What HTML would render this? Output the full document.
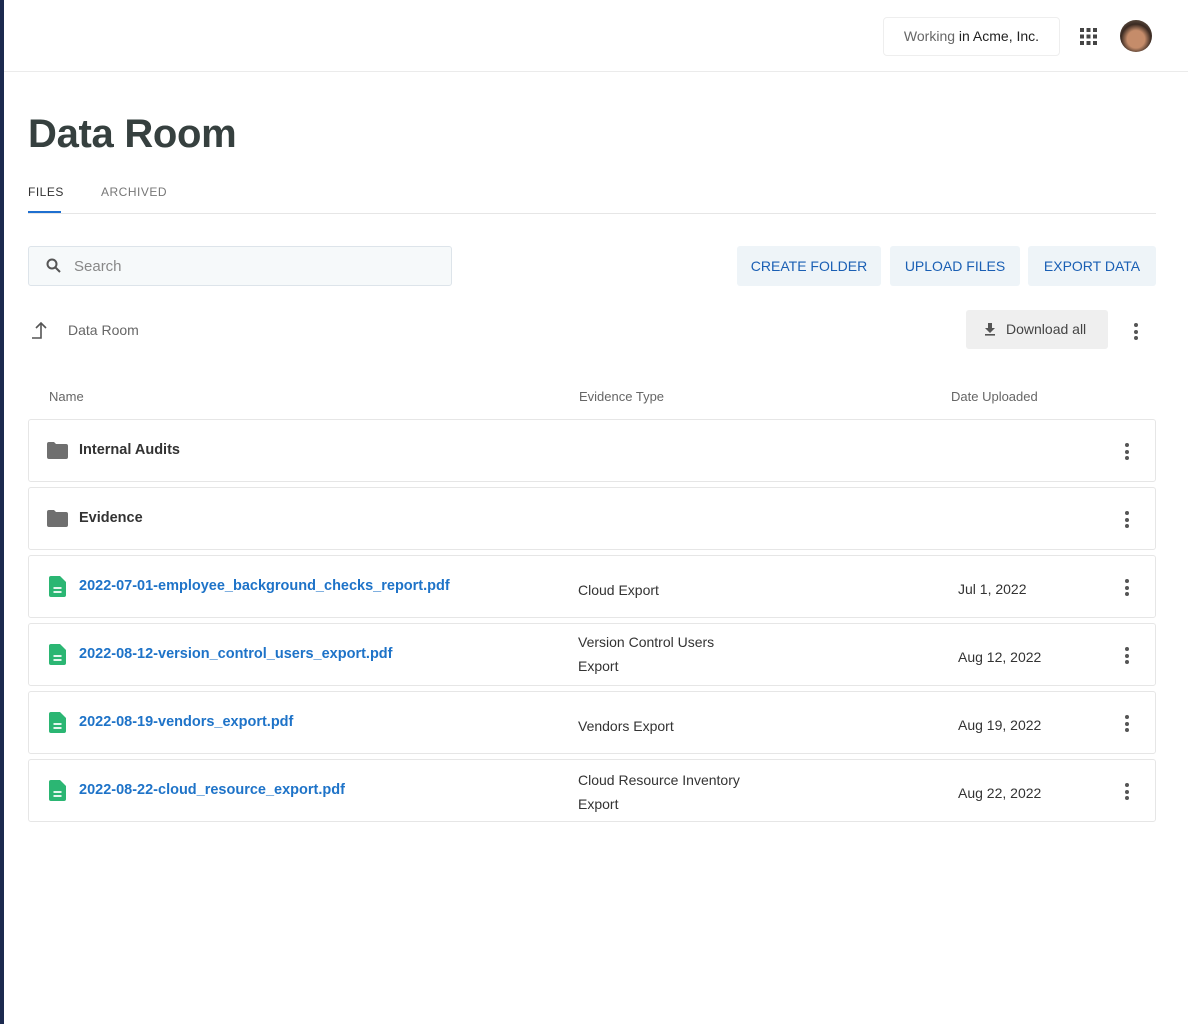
<!DOCTYPE html>
<html><head><meta charset="utf-8"><style>
*{box-sizing:border-box;margin:0;padding:0}
body{width:1188px;height:1024px;background:#fff;font-family:"Liberation Sans",sans-serif;position:relative;overflow:hidden;color:#333}
.strip{position:absolute;left:0;top:0;width:4px;height:1024px;background:#1c2a4f}
.abs{position:absolute}
.top{position:absolute;left:4px;right:0;top:71px;height:1px;background:#ebebeb}
.work{left:883px;top:17px;width:177px;height:39px;border:1px solid #eee;border-radius:4px;font-size:14px;line-height:37px;text-align:center;color:#222}
.work span{color:#666}
h1{position:absolute;left:28px;top:112px;font-size:40px;font-weight:700;color:#36403f;letter-spacing:-0.3px}
.tab{font-size:12px;letter-spacing:0.5px;top:185px}
.btn{top:246px;height:40px;background:#eef4f8;border-radius:3px;color:#1a5fb4;font-size:14px;line-height:40px;text-align:center}
.row{position:absolute;left:28px;width:1128px;height:63px;border:1px solid #e6e6e6;border-radius:3px}
.row .n{position:absolute;left:50px;top:22px;font-size:14.5px;font-weight:700}
.row .n.f{color:#1e73c8}
.row .e{position:absolute;left:549px;font-size:14px;color:#333;line-height:24px}
.row .d{position:absolute;left:929px;top:25px;font-size:14px}
.row svg{position:absolute}
.dots{position:absolute;width:4px}
.dots i{display:block;width:4px;height:4px;border-radius:2px;background:#555;margin-bottom:2.5px}
</style></head><body>
<div class="strip"></div>
<div class="top"></div>
<div class="abs work"><span>Working</span> in Acme, Inc.</div>
<svg class="abs" style="left:1080px;top:28px" width="17" height="17" viewBox="0 0 17 17" fill="#444"><rect x="0" y="0" width="4" height="4"/><rect x="6.5" y="0" width="4" height="4"/><rect x="13" y="0" width="4" height="4"/><rect x="0" y="6.5" width="4" height="4"/><rect x="6.5" y="6.5" width="4" height="4"/><rect x="13" y="6.5" width="4" height="4"/><rect x="0" y="13" width="4" height="4"/><rect x="6.5" y="13" width="4" height="4"/><rect x="13" y="13" width="4" height="4"/></svg>
<div class="abs" style="left:1120px;top:20px;width:32px;height:32px;border-radius:16px;background:radial-gradient(circle at 50% 60%,#c58c6a 0 35%,#3a2a22 60%,#7a6a5a 100%)"></div>
<h1>Data Room</h1>
<div class="abs tab" style="left:28px;color:#333">FILES</div>
<div class="abs tab" style="left:101px;color:#777">ARCHIVED</div>
<div class="abs" style="left:28px;top:213px;width:1128px;height:1px;background:#e6e6e6"></div>
<div class="abs" style="left:28px;top:211px;width:33px;height:2px;background:#1e6fd0"></div>
<div class="abs" style="left:28px;top:246px;width:424px;height:40px;border:1px solid #dde4ea;border-radius:3px;background:#f6f9fa"></div>
<svg class="abs" style="left:46px;top:258px" width="16" height="16" viewBox="0 0 16 16" fill="none" stroke="#555" stroke-width="2"><circle cx="6" cy="6" r="4.5"/><path d="M9.5 9.5L14 14"/></svg>
<div class="abs" style="left:74px;top:258px;font-size:15px;color:#888">Search</div>
<div class="abs btn" style="left:737px;width:144px">CREATE FOLDER</div>
<div class="abs btn" style="left:890px;width:130px">UPLOAD FILES</div>
<div class="abs btn" style="left:1028px;width:128px">EXPORT DATA</div>
<svg class="abs" style="left:31px;top:321px" width="20" height="18" viewBox="0 0 20 18" fill="none" stroke="#555" stroke-width="1.6"><path d="M1 17H10V3M5 7L10 2L15 7"/></svg>
<div class="abs" style="left:68px;top:322px;font-size:14px;color:#666">Data Room</div>
<div class="abs" style="left:966px;top:310px;width:142px;height:39px;background:#efefef;border-radius:3px;font-size:14px;line-height:39px;color:#444;padding-left:40px">Download all</div>
<svg class="abs" style="left:984px;top:323px" width="12" height="13" viewBox="0 0 12 13" fill="#555"><path d="M4 0h4v5h3l-5 5-5-5h3z"/><rect x="1" y="11" width="10" height="1.6"/></svg>
<div class="dots" style="left:1134px;top:323px"><i></i><i></i><i></i></div>
<div class="abs" style="left:49px;top:389px;font-size:13px;color:#666">Name</div>
<div class="abs" style="left:579px;top:389px;font-size:13px;color:#666">Evidence Type</div>
<div class="abs" style="left:951px;top:389px;font-size:13px;color:#666">Date Uploaded</div>

<div class="row" style="top:419px"><svg style="left:18px;top:22px" width="21" height="17" viewBox="0 0 21 17"><path d="M0 2a2 2 0 0 1 2-2h5l2 2h10a2 2 0 0 1 2 2v11a2 2 0 0 1-2 2H2a2 2 0 0 1-2-2z" fill="#6f6f6f"/></svg><div class="n" style="color:#333">Internal Audits</div><div class="dots" style="left:1096px;top:23px"><i></i><i></i><i></i></div></div>
<div class="row" style="top:487px"><svg style="left:18px;top:22px" width="21" height="17" viewBox="0 0 21 17"><path d="M0 2a2 2 0 0 1 2-2h5l2 2h10a2 2 0 0 1 2 2v11a2 2 0 0 1-2 2H2a2 2 0 0 1-2-2z" fill="#6f6f6f"/></svg><div class="n" style="color:#333">Evidence</div><div class="dots" style="left:1096px;top:23px"><i></i><i></i><i></i></div></div>

<div class="row" style="top:555px"><svg style="left:20px;top:20px" width="17" height="21" viewBox="0 0 17 21"><path d="M2 0h9l6 6v13a2 2 0 0 1-2 2H2a2 2 0 0 1-2-2V2a2 2 0 0 1 2-2z" fill="#2bb673"/><path d="M4.5 12h8M4.5 16h8" stroke="#fff" stroke-width="1.8"/></svg><div class="n f">2022-07-01-employee_background_checks_report.pdf</div><div class="e" style="top:22px">Cloud Export</div><div class="d" style="top:25px">Jul 1, 2022</div><div class="dots" style="left:1096px;top:23px"><i></i><i></i><i></i></div></div>
<div class="row" style="top:623px"><svg style="left:20px;top:20px" width="17" height="21" viewBox="0 0 17 21"><path d="M2 0h9l6 6v13a2 2 0 0 1-2 2H2a2 2 0 0 1-2-2V2a2 2 0 0 1 2-2z" fill="#2bb673"/><path d="M4.5 12h8M4.5 16h8" stroke="#fff" stroke-width="1.8"/></svg><div class="n f">2022-08-12-version_control_users_export.pdf</div><div class="e" style="top:6px">Version Control Users<br>Export</div><div class="d">Aug 12, 2022</div><div class="dots" style="left:1096px;top:23px"><i></i><i></i><i></i></div></div>
<div class="row" style="top:691px"><svg style="left:20px;top:20px" width="17" height="21" viewBox="0 0 17 21"><path d="M2 0h9l6 6v13a2 2 0 0 1-2 2H2a2 2 0 0 1-2-2V2a2 2 0 0 1 2-2z" fill="#2bb673"/><path d="M4.5 12h8M4.5 16h8" stroke="#fff" stroke-width="1.8"/></svg><div class="n f">2022-08-19-vendors_export.pdf</div><div class="e" style="top:22px">Vendors Export</div><div class="d">Aug 19, 2022</div><div class="dots" style="left:1096px;top:23px"><i></i><i></i><i></i></div></div>
<div class="row" style="top:759px"><svg style="left:20px;top:20px" width="17" height="21" viewBox="0 0 17 21"><path d="M2 0h9l6 6v13a2 2 0 0 1-2 2H2a2 2 0 0 1-2-2V2a2 2 0 0 1 2-2z" fill="#2bb673"/><path d="M4.5 12h8M4.5 16h8" stroke="#fff" stroke-width="1.8"/></svg><div class="n f">2022-08-22-cloud_resource_export.pdf</div><div class="e" style="top:8px">Cloud Resource Inventory<br>Export</div><div class="d">Aug 22, 2022</div><div class="dots" style="left:1096px;top:23px"><i></i><i></i><i></i></div></div>
</body></html>
